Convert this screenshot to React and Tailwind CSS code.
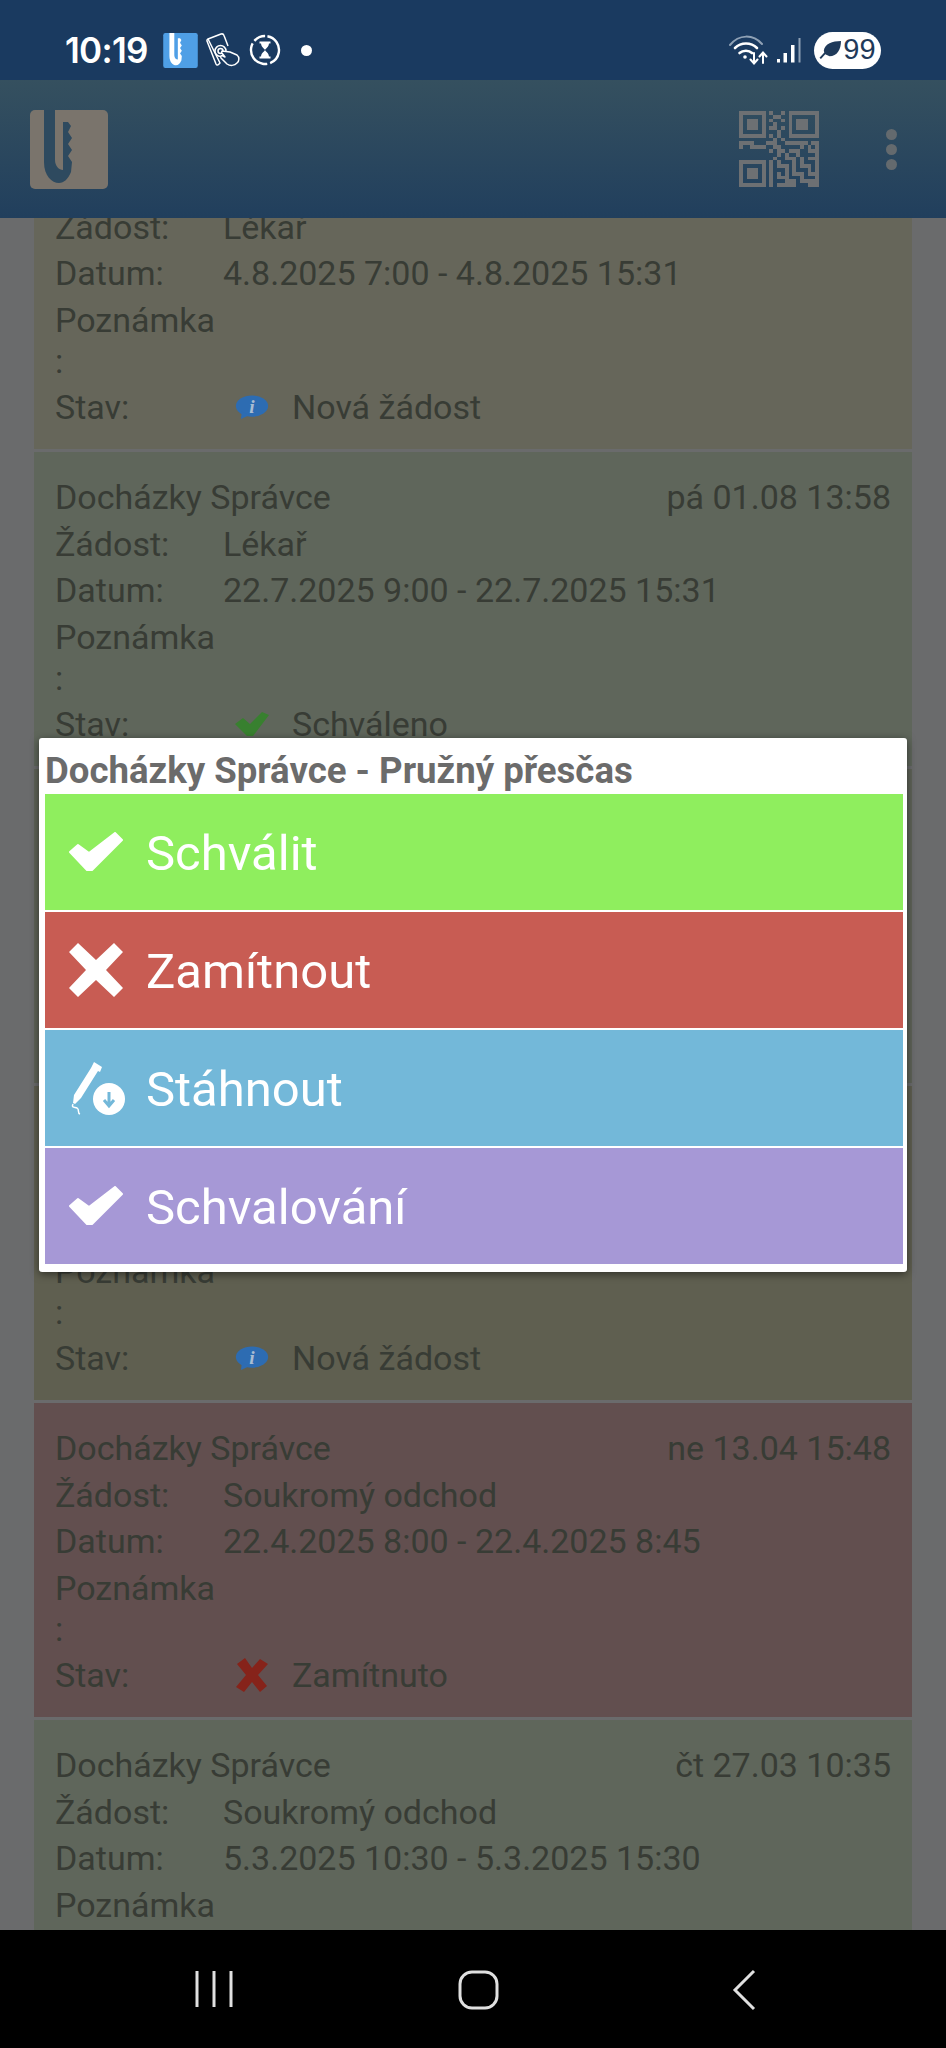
import React from "react";

const StatusIcon = ({ type }) => {
  if (type === "new") {
    return (
      <svg viewBox="0 0 36 26" className="w-[34px] h-[24px]">
        <ellipse cx="18" cy="12" rx="17.5" ry="11.5" fill="#2d6cb2" />
        <path d="M7 18 L6 26 L15 22 Z" fill="#2d6cb2" />
        <text x="18" y="20" textAnchor="middle" fontSize="21" fontStyle="italic" fontWeight="700" fontFamily="Liberation Serif, serif" fill="#a9bdd2">i</text>
      </svg>
    );
  }
  if (type === "ok") {
    return (
      <svg viewBox="0 0 34 24" className="w-[34px] h-[24px]">
        <path d="M0 12 L8 6 L15 12 L27 0 L34 3 L18 24 L12 24 Z" fill="#38802f" />
      </svg>
    );
  }
  return (
    <svg viewBox="0 0 34 34" className="w-[34px] h-[34px]">
      <path d="M2 6 L10 0 L17 10 L25 1 L33 6 L23 17 L32 28 L25 34 L17 24 L9 34 L1 29 L11 17 Z" fill="#86231a" />
    </svg>
  );
};

const Card = ({ tone, date, kind, range, state, stateLabel }) => (
  <div className={`mx-[34px] h-[314px] px-[21px] pt-[22px] text-[34px] leading-[46.5px] text-[#383c35] whitespace-nowrap ${tone}`}>
    <div className="flex justify-between">
      <span>Docházky Správce</span>
      <span>{date}</span>
    </div>
    <div className="grid grid-cols-[168px_1fr]">
      <span>Žádost:</span>
      <span>{kind}</span>
      <span>Datum:</span>
      <span>{range}</span>
      <span className="leading-[41px] pt-[3px]">
        Poznámka
        <br />:
      </span>
      <span />
      <span className="mt-[2px]">Stav:</span>
      <span className="mt-[2px] flex items-center">
        <span className="w-[60px] pl-[12px] flex items-center">
          <StatusIcon type={state} />
        </span>
        <span className="ml-[9px]">{stateLabel}</span>
      </span>
    </div>
  </div>
);

const KeyLogo = ({ className, bg, cut }) => (
  <svg viewBox="0 0 78 79" className={className}>
    <rect width="78" height="79" rx="5" fill={bg} />
    <path
      d="M14 0 H25 V50 C25 56 29 60 33 60 V12 L38 12 L41 16 L38 22 L42 28 L38 34 L42 40 L38 46 L42 52 L41 62 C38 69 34 73 29 73 C22 73 14 66 14 52 Z"
      fill={cut}
    />
  </svg>
);

// approximate QR pattern, one row per string on a 21x21 grid
const qrModules = [
  "111111101001011111111",
  "100000100110010000001",
  "101110101001010111001",
  "101110100100010111001",
  "101110101101010111001",
  "100000100010010000001",
  "111111101010011111111",
  "000000000101000000000",
  "111100011100111111011",
  "100111100110000010101",
  "000000001011011100111",
  "000000000010100100001",
  "000000000100111010111",
  "111111101010001010001",
  "100000101011101011101",
  "101110101000101000101",
  "101110101010101110111",
  "101110101011100010001",
  "100000101000111011111",
  "111111101011111000111",
];

const QrIcon = () => (
  <svg viewBox="0 0 21 20" className="w-[80px] h-[82px]" fill="#6d7073" shapeRendering="crispEdges">
    {qrModules.map((row, y) =>
      row.split("").map((cell, x) =>
        cell === "1" ? <rect key={`${x}-${y}`} x={x} y={y} width="1" height="1" /> : null
      )
    )}
  </svg>
);

const TapIcon = () => (
  <svg viewBox="0 0 34 34" className="w-[34px] h-[34px]" fill="none" stroke="#fff" strokeWidth="1.5" strokeLinejoin="round">
    <path d="M2 6 L15 1 C16.5 0.6 17.5 1 18 2.5 L22 13 M14 30 L12.5 31.5 C11.5 32.5 10.5 32 10 31 L1 8 C0.8 7 1 6.5 2 6 Z" />
    <circle cx="14.5" cy="18" r="5.5" />
    <circle cx="14.5" cy="18" r="2.5" />
    <path d="M16 18 L24 19 L31 22 C33.5 24 33.5 28 31 30 C28.5 33 24 33 21 31 L15 25 C14 23.5 15.5 22 17 23 L19 24 L15.5 19.5 Z" fill="#1a3a60" />
  </svg>
);

const HourglassIcon = () => (
  <svg viewBox="0 0 32 32" className="w-[32px] h-[32px]" fill="none" stroke="#fff">
    <circle cx="16" cy="16" r="14" strokeWidth="2.4" strokeDasharray="36 3 31 3 12 3" transform="rotate(-80 16 16)" />
    <path d="M10.5 8.5 H21.5 M10.5 23.5 H21.5" strokeWidth="2" />
    <path d="M12 9 H20 C20 13 17 14 16 16 C15 14 12 13 12 9 Z M16 16 C17 18 20 19 20 23 H12 C12 19 15 18 16 16 Z" fill="#fff" stroke="none" />
  </svg>
);

const WifiIcon = () => (
  <svg viewBox="0 0 40 30" className="w-[40px] h-[30px]" fill="none" stroke="#fff" strokeLinecap="round">
    <path d="M1 10 C10 -1 24 -1 33 9" stroke="#8fa1b5" strokeWidth="2" />
    <path d="M6 13 C12 7 22 7 28 13" strokeWidth="2.6" />
    <path d="M10.5 18 C14 15 20 15 23 18" strokeWidth="2.6" />
    <circle cx="16" cy="22" r="1.8" fill="#fff" stroke="none" />
    <path d="M25 18 V28 M21.5 24.5 L25 28.5 L28.5 24.5" strokeWidth="2" />
    <path d="M34 28 V18 M30.5 21.5 L34 17.5 L37.5 21.5" strokeWidth="2" />
  </svg>
);

const SignalIcon = () => (
  <svg viewBox="0 0 26 27" className="w-[26px] h-[27px]">
    <rect x="1" y="22" width="3" height="3.5" fill="#fff" />
    <rect x="7.5" y="16" width="3.5" height="9.5" fill="#fff" />
    <rect x="15" y="8" width="3.5" height="17.5" fill="#fff" />
    <rect x="22.5" y="1" width="2" height="24.5" fill="#8fa1b5" />
  </svg>
);

const LeafIcon = () => (
  <svg viewBox="0 0 24 22" className="w-[23px] h-[21px]" fill="#1f3a5a">
    <path d="M5 11 C6 4 14 1 23 1 C23 10 19 17 11 17 L6.5 15 L2 20 L0.5 18.5 L5.5 13 Z" />
  </svg>
);

const CheckIcon = () => (
  <svg viewBox="0 0 54 40" className="w-[54px] h-[40px]" fill="#fff" stroke="#fff" strokeWidth="2" strokeLinejoin="round">
    <path d="M1 20 L9 13 L20 21 L46 1 L53 8 L23 38 L18 38 Z" />
  </svg>
);

const CrossIcon = () => (
  <svg viewBox="0 0 54 54" className="w-[54px] h-[54px]" fill="#fff">
    <path d="M0 9 L9 0 L27 17 L45 0 L54 9 L37 27 L54 45 L45 54 L27 37 L9 54 L0 45 L17 27 Z" />
  </svg>
);

const PenDownloadIcon = () => (
  <svg viewBox="0 0 56 56" className="w-[56px] h-[56px]">
    <path d="M25 2 L33 7 L31 12 L29 11 L12 38 L6 44 L4 43 L5 35 L22 8 Z" fill="#fff" />
    <path d="M4 44 C2 48 6 47 8 48 C11 50 8 53 11 54" fill="none" stroke="#fff" strokeWidth="1.5" />
    <circle cx="40" cy="39" r="16" fill="#fff" />
    <path d="M40 32 V45 M35 40 L40 46 L45 40" fill="none" stroke="#73b8d9" strokeWidth="3" />
  </svg>
);

const actions = [
  { label: "Schválit", tone: "bg-[#8fee5e]", icon: <CheckIcon /> },
  { label: "Zamítnout", tone: "bg-[#c85c53]", icon: <CrossIcon /> },
  { label: "Stáhnout", tone: "bg-[#73b8d9]", icon: <PenDownloadIcon /> },
  { label: "Schvalování", tone: "bg-[#a698d6]", icon: <CheckIcon /> },
];

export default function App() {
  return (
    <div className="relative w-[946px] h-[2048px] overflow-hidden flex flex-col bg-[#6a6b6c] font-['Roboto',sans-serif]">
      {/* status bar */}
      <div className="h-[80px] shrink-0 bg-[#1a3a60] flex items-center justify-between pl-[65px] pr-[65px] pt-[20px] text-white">
        <div className="flex items-center">
          <span className="text-[35px] font-semibold w-[98px] font-['Inter',sans-serif] tracking-[-0.7px]">10:19</span>
          <KeyLogo className="w-[35px] h-[35px]" bg="#4f9fe6" cut="#fff" />
          <span className="ml-[8px]">
            <TapIcon />
          </span>
          <span className="ml-[9px]">
            <HourglassIcon />
          </span>
          <span className="ml-[20px] w-[11px] h-[11px] rounded-full bg-white" />
        </div>
        <div className="flex items-center">
          <WifiIcon />
          <span className="ml-[7px]">
            <SignalIcon />
          </span>
          <div className="ml-[12px] w-[67px] h-[37px] rounded-full bg-white flex items-center justify-center gap-[1px] text-[#1f3a5a] text-[29px] font-['Liberation_Sans',sans-serif]">
            <LeafIcon />
            <span>99</span>
          </div>
        </div>
      </div>

      {/* app bar */}
      <div className="h-[138px] shrink-0 relative z-10 flex items-center justify-between pl-[30px] pr-[49px] bg-gradient-to-b from-[#35505f] to-[#213f5d]">
        <KeyLogo className="w-[78px] h-[79px]" bg="#7a746c" cut="#2e4a5f" />
        <div className="flex items-center gap-[67px]">
          <QrIcon />
          <div className="flex flex-col gap-[4px]">
            <span className="w-[11px] h-[11px] rounded-full bg-[#646a6e]" />
            <span className="w-[11px] h-[11px] rounded-full bg-[#646a6e]" />
            <span className="w-[11px] h-[11px] rounded-full bg-[#646a6e]" />
          </div>
        </div>
      </div>

      {/* request list, scrolled */}
      <div className="flex-1 overflow-hidden">
        <div className="flex flex-col gap-[3px] -mt-[83px]">
          <Card tone="bg-[#66665a]" date="po 04.08 15:40" kind="Lékař" range="4.8.2025 7:00 - 4.8.2025 15:31" state="new" stateLabel="Nová žádost" />
          <Card tone="bg-[#5f665b]" date="pá 01.08 13:58" kind="Lékař" range="22.7.2025 9:00 - 22.7.2025 15:31" state="ok" stateLabel="Schváleno" />
          <Card tone="bg-[#5f6358]" date="čt 24.07 08:12" kind="Pružný přesčas" range="23.7.2025 7:00 - 23.7.2025 16:00" state="ok" stateLabel="Schváleno" />
          <Card tone="bg-[#5f5f50]" date="st 16.04 09:20" kind="Pružný přesčas" range="15.4.2025 7:00 - 15.4.2025 17:00" state="new" stateLabel="Nová žádost" />
          <Card tone="bg-[#624f4f]" date="ne 13.04 15:48" kind="Soukromý odchod" range="22.4.2025 8:00 - 22.4.2025 8:45" state="no" stateLabel="Zamítnuto" />
          <Card tone="bg-[#5f665b]" date="čt 27.03 10:35" kind="Soukromý odchod" range="5.3.2025 10:30 - 5.3.2025 15:30" state="ok" stateLabel="Schváleno" />
        </div>
      </div>

      {/* nav bar */}
      <div className="h-[118px] shrink-0 relative z-10 bg-black">
        <svg viewBox="0 0 946 118" className="w-[946px] h-[118px]" fill="none" stroke="#e0e0e0" strokeWidth="3">
          <path d="M197 41 V77 M214 41 V77 M231 41 V77" />
          <rect x="460" y="42" width="37" height="36" rx="12" />
          <path d="M754 41 L735 60 L754 79" />
        </svg>
      </div>

      {/* action dialog */}
      <div className="absolute z-20 left-[39px] top-[738px] w-[868px] h-[534px] bg-white rounded-[3px] shadow-[0_2px_8px_rgba(0,0,0,0.5)] pl-[6px] pr-[4px] pt-[15px]">
        <div className="h-[41px] text-[36.6px] leading-[36px] font-bold text-[#6b6b6b] whitespace-nowrap">
          Docházky Správce - Pružný přesčas
        </div>
        <div className="flex flex-col gap-[2px]">
          {actions.map((action) => (
            <div key={action.label} className={`h-[116px] flex items-center text-white text-[49px] ${action.tone}`}>
              <span className="w-[101px] pl-[24px] flex items-center">{action.icon}</span>
              <span className="pt-[3px]">{action.label}</span>
            </div>
          ))}
        </div>
      </div>
    </div>
  );
}
